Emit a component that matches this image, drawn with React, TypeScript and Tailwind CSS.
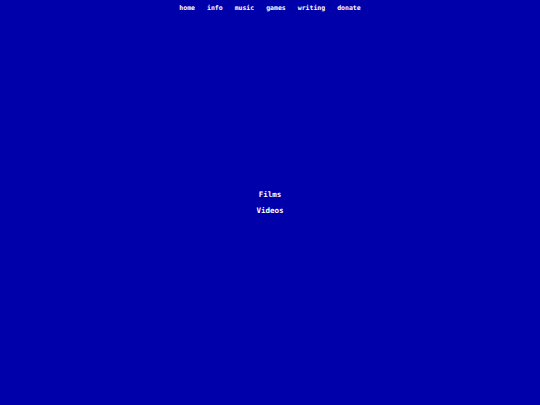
const links = ['home', 'info', 'music', 'games', 'writing', 'donate'];

export default function App() {
  return (
    <div className="min-h-screen h-[405px] bg-[#0000aa] text-white flex flex-col font-['DejaVu_Sans_Mono',monospace] font-bold">
      <nav className="flex justify-center gap-[12px] pt-[4px] text-[6.5px] leading-[8px]">
        {links.map(l => (
          <span key={l} className="text-white cursor-pointer">{l}</span>
        ))}
      </nav>
      <div className="flex-1 flex flex-col items-center justify-center gap-[7px] text-[7.5px] leading-[9px] pb-[12px]">
        <span className="cursor-pointer">Films</span>
        <span className="cursor-pointer">Videos</span>
      </div>
    </div>
  );
}
